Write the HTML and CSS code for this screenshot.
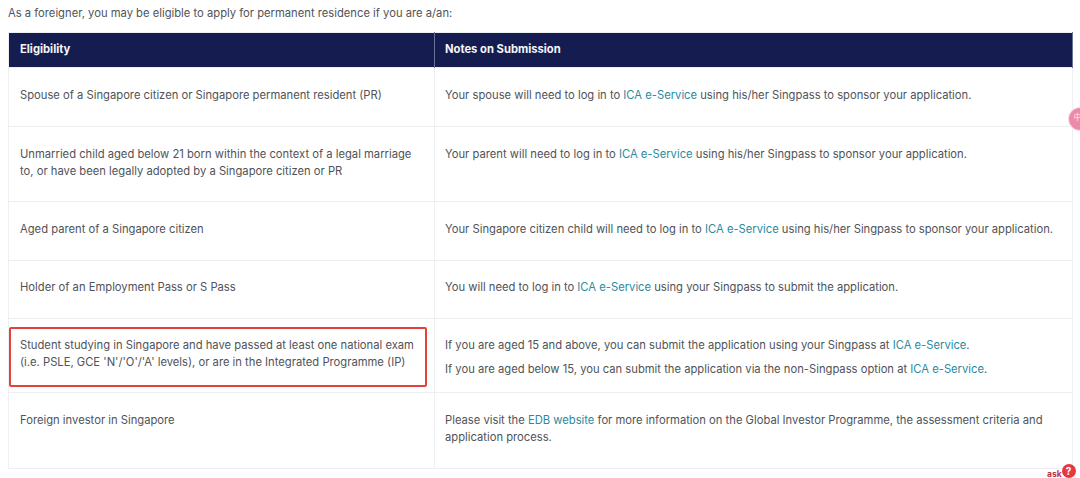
FILE: index.html
```html
<!DOCTYPE html>
<html lang="en">
<head>
<meta charset="utf-8">
<title>Permanent residence eligibility</title>
<link rel="stylesheet" href="styles.css">
</head>
<body>
<p class="intro">As a foreigner, you may be eligible to apply for permanent residence if you are a/an:</p>
<table class="elig">
  <colgroup><col class="col-a"><col class="col-b"></colgroup>
  <thead>
    <tr class="r-head"><th>Eligibility</th><th>Notes on Submission</th></tr>
  </thead>
  <tbody>
    <tr class="r1">
      <td>Spouse of a Singapore citizen or Singapore permanent resident (PR)</td>
      <td>Your spouse will need to log in to <a href="#">ICA e-Service</a> using his/her Singpass to sponsor your application.</td>
    </tr>
    <tr class="r2">
      <td>Unmarried child aged below 21 born within the context of a legal marriage to, or have been legally adopted by a Singapore citizen or PR</td>
      <td>Your parent will need to log in to <a href="#">ICA e-Service</a> using his/her Singpass to sponsor your application.</td>
    </tr>
    <tr class="r3">
      <td>Aged parent of a Singapore citizen</td>
      <td>Your Singapore citizen child will need to log in to <a href="#">ICA e-Service</a> using his/her Singpass to sponsor your application.</td>
    </tr>
    <tr class="r4">
      <td>Holder of an Employment Pass or S Pass</td>
      <td>You will need to log in to <a href="#">ICA e-Service</a> using your Singpass to submit the application.</td>
    </tr>
    <tr class="r5">
      <td class="marked">Student studying in Singapore and have passed at least one national exam (i.e. PSLE, GCE 'N'/'O'/'A' levels), or are in the Integrated Programme (IP)<span class="red-box"></span></td>
      <td>
        <p class="note">If you are aged 15 and above, you can submit the application using your Singpass at <a href="#">ICA e-Service</a>.</p>
        <p class="note">If you are aged below 15, you can submit the application via the non-Singpass option at <a href="#">ICA e-Service</a>.</p>
      </td>
    </tr>
    <tr class="r6">
      <td>Foreign investor in Singapore</td>
      <td>Please visit the <a href="#">EDB website</a> <span>for more information on the Global Investor Programme, the assessment criteria and</span> <span>application process.</span></td>
    </tr>
  </tbody>
</table>
<div class="side-badge"><span class="side-glyph">中</span></div>
<div class="ask"><span class="ask-label">ask</span><span class="ask-dot">?</span></div>
</body>
</html>
```
FILE: styles.css
```css
html, body {
  margin: 0;
  padding: 0;
  height: 478px;
  overflow: hidden;
  background: #fff;
}
body {
  position: relative;
  padding: 0 8px;
  font-family: Inter, "Liberation Sans", sans-serif;
  font-size: 11.22px;
  line-height: 17px;
  color: #505358;
}
.intro {
  margin: 0;
  padding-top: 5px;
  height: 32px;
  box-sizing: border-box;
}
.elig {
  table-layout: fixed;
  border-collapse: collapse;
  width: 1064px;
  border: 1px solid #eeeff2;
}
.col-a { width: 426px; }
.col-b { width: 638px; }
th {
  background: #141c50;
  color: #f4f5f9;
  font-weight: 700;
  text-align: left;
  vertical-align: middle;
  padding: 0 11px 1px;
  border-right: 1px solid #6b7297;
}
td {
  vertical-align: top;
  padding: 19px 11px 0;
  border: 1px solid #eeeff2;
}
th:last-child,
td:last-child {
  padding-left: 10px;
}
.r-head { height: 35px; }
.r1 { height: 59px; }
.r2 { height: 75px; }
.r3 { height: 59px; }
.r4 { height: 58px; }
.r5 { height: 74px; }
.r6 { height: 76px; }
.r4 td { padding-top: 18px; }
.r5 td { padding-top: 18px; }
.marked { position: relative; }
.note { margin: 0 0 7px; }
a {
  color: #2b8a9e;
  text-decoration: none;
}
.red-box {
  position: absolute;
  left: 0;
  top: 8px;
  width: 414px;
  height: 56px;
  border: 2px solid #e2423b;
  border-radius: 2px;
}
.side-badge {
  position: absolute;
  left: 1069px;
  top: 108px;
  width: 22px;
  height: 22px;
  border-radius: 50%;
  background: #ec8aa8;
  box-shadow: 0 0 0 1px #fbdde6;
  display: flex;
  align-items: center;
  justify-content: center;
}
.side-glyph {
  font-family: "Noto Sans CJK SC", sans-serif;
  font-size: 8px;
  line-height: 10px;
  color: #fde8ee;
  margin: 0 5px 4px 0;
}
.ask {
  position: absolute;
  left: 1047px;
  top: 464px;
  height: 14px;
  display: flex;
  align-items: flex-end;
}
.ask-label {
  font-size: 8.5px;
  line-height: 8px;
  font-weight: 700;
  color: #b93248;
}
.ask-dot {
  width: 14px;
  height: 14px;
  border-radius: 50%;
  background: #e5383f;
  color: #fff;
  font-size: 10px;
  font-weight: 700;
  line-height: 14px;
  text-align: center;
}
```
